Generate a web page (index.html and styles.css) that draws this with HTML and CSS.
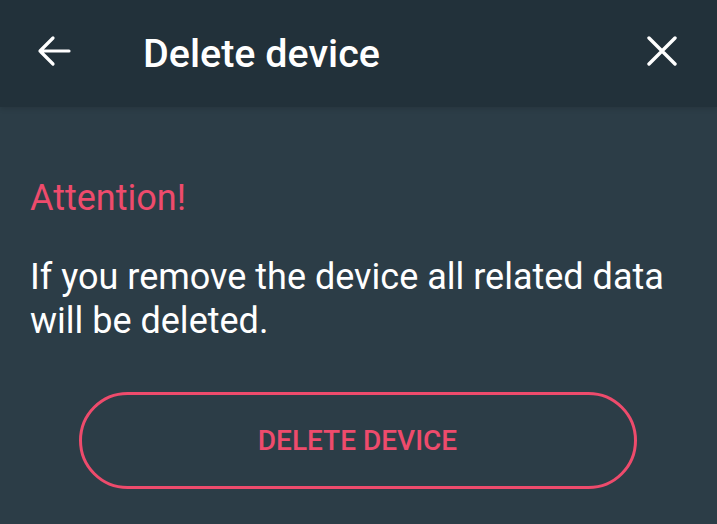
FILE: index.html
```html
<!DOCTYPE html>
<html>
<head>
<meta charset="utf-8">
<link rel="stylesheet" href="styles.css">
</head>
<body>
<div class="screen">
  <header class="topbar">
    <button class="icon-btn back" aria-label="Back">
      <svg width="34" height="32" viewBox="0 0 34 32"><path d="M32 16H3M16 3L3 16l13 13" fill="none" stroke="#fff" stroke-width="3.2" stroke-linecap="round" stroke-linejoin="round"/></svg>
    </button>
    <h1 class="title">Delete device</h1>
    <button class="icon-btn close" aria-label="Close">
      <svg width="30" height="30" viewBox="0 0 30 30"><path d="M2 2L28 28M28 2L2 28" fill="none" stroke="#fff" stroke-width="3.4" stroke-linecap="round"/></svg>
    </button>
  </header>
  <main class="content">
    <p class="attention">Attention!</p>
    <p class="message">If you remove the device all related data will be deleted.</p>
    <div class="actions">
      <button class="delete-btn">DELETE DEVICE</button>
    </div>
  </main>
</div>
</body>
</html>
```
FILE: styles.css
```css
* { box-sizing: border-box; }
html, body { margin: 0; padding: 0; }
body {
  width: 717px;
  height: 524px;
  overflow: hidden;
  background: #2c3d47;
  font-family: Roboto, "Liberation Sans", sans-serif;
}
.screen { display: flex; flex-direction: column; height: 100%; }
.topbar {
  height: 107px;
  background: #22313a;
  display: flex;
  align-items: center;
  padding: 0 40px 0 37px;
  box-shadow: 0 2px 5px rgba(0,0,0,0.12);
}
.icon-btn {
  background: none;
  border: 0;
  padding: 0;
  display: flex;
  cursor: pointer;
}
.back { margin-top: -6px; }
.close { margin-left: auto; margin-top: -6px; }
.title {
  margin: 0 0 1px 72px;
  color: #fff;
  font-size: 39.5px;
  font-weight: 500;
}
.content { padding: 69px 30px 0 30px; }
.attention {
  margin: 0;
  color: #ee4b6c;
  font-size: 36px;
  line-height: 44px;
}
.message {
  margin: 35px 0 0 0;
  color: #fff;
  font-size: 36px;
  line-height: 44px;
}
.actions { display: flex; justify-content: center; margin-top: 49px; }
.delete-btn {
  width: 558px;
  height: 97px;
  border: 3px solid #ee4b6c;
  border-radius: 49px;
  background: transparent;
  color: #ee4b6c;
  font-family: Roboto, "Liberation Sans", sans-serif;
  font-weight: 500;
  font-size: 28px;
  margin-left: -2px;
}
```
